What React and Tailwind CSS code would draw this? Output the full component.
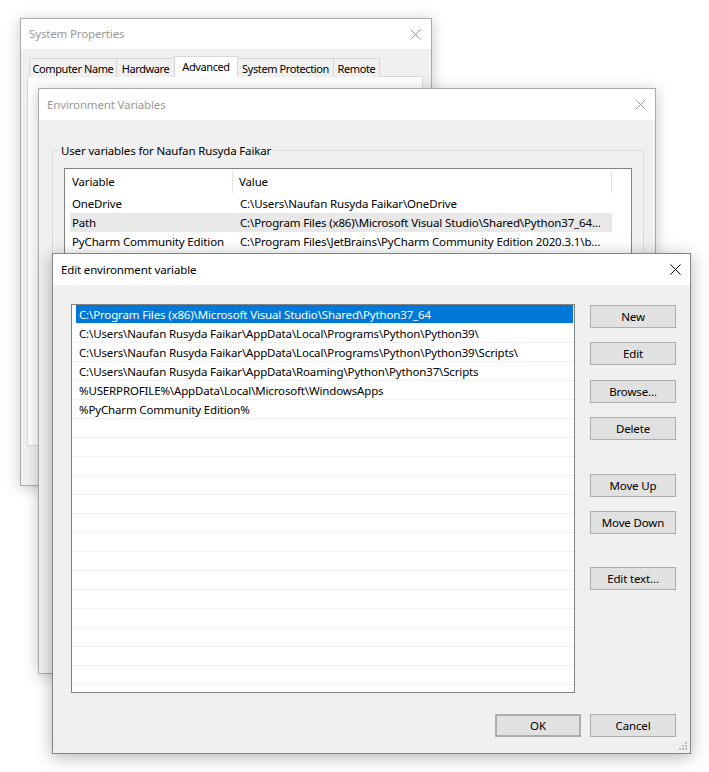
import React from "react";

function CloseX({ color }) {
  return (
    <svg width="11" height="11" viewBox="0 0 11 11" className="block">
      <path d="M0.5 0.5 L10.5 10.5 M10.5 0.5 L0.5 10.5" stroke={color} strokeWidth="1" fill="none" />
    </svg>
  );
}

function Btn({ children, className = "" }) {
  return (
    <div
      className={
        "w-[86px] h-[23px] flex items-center justify-center bg-[#e1e1e1] border border-[#adadad] text-black leading-none " +
        className
      }
    >
      {children}
    </div>
  );
}

const paths = [
  "C:\\Program Files (x86)\\Microsoft Visual Studio\\Shared\\Python37_64",
  "C:\\Users\\Naufan Rusyda Faikar\\AppData\\Local\\Programs\\Python\\Python39\\",
  "C:\\Users\\Naufan Rusyda Faikar\\AppData\\Local\\Programs\\Python\\Python39\\Scripts\\",
  "C:\\Users\\Naufan Rusyda Faikar\\AppData\\Roaming\\Python\\Python37\\Scripts",
  "%USERPROFILE%\\AppData\\Local\\Microsoft\\WindowsApps",
  "%PyCharm Community Edition%",
];

const tab = "h-[19px] border border-b-0 border-[#d9d9d9] bg-[#f0f0f0] flex items-center justify-center leading-none whitespace-nowrap text-[11px] tracking-[-0.4px]";

export default function App() {
  const rows = Array.from({ length: 20 }, (_, i) => paths[i] || "");
  return (
    <div className="relative w-[709px] h-[772px] bg-white overflow-hidden font-['Noto_Sans',sans-serif] text-[11.5px] tracking-[-0.15px] text-black">
      {/* System Properties window */}
      <div className="absolute left-[20px] top-[18px] w-[412px] h-[468px] border border-[#aaaaaa] bg-[#f0f0f0] shadow-[0_2px_14px_rgba(0,0,0,0.22)] flex flex-col">
        <div className="h-[30px] bg-white flex items-center justify-between pl-[8px] pr-[10px] shrink-0">
          <span className="text-[#999999]">System Properties</span>
          <CloseX color="#999999" />
        </div>
        <div className="px-[6px] pt-[7px]">
          <div className="flex items-end h-[21px] pl-[2px]">
            <div className={tab + " w-[88px]"}>Computer Name</div>
            <div className={tab + " -ml-px w-[59px]"}>Hardware</div>
            <div className="-ml-px w-[64px] h-[21px] border border-b-0 border-[#d9d9d9] bg-white flex items-center justify-center pb-[2px] leading-none whitespace-nowrap text-[11px] tracking-[-0.4px] relative z-10">Advanced</div>
            <div className={tab + " -ml-px w-[97px]"}>System Protection</div>
            <div className={tab + " -ml-px w-[47px]"}>Remote</div>
          </div>
          <div className="-mt-px w-[396px] h-[370px] border border-[#d9d9d9] bg-white" />
        </div>
      </div>

      {/* Environment Variables window */}
      <div className="absolute left-[38px] top-[88px] w-[618px] h-[586px] border border-[#aaaaaa] bg-[#f0f0f0] shadow-[0_2px_14px_rgba(0,0,0,0.22)] flex flex-col">
        <div className="h-[31px] bg-white flex items-center justify-between pl-[8px] pr-[9px] shrink-0">
          <span className="text-[#999999]">Environment Variables</span>
          <CloseX color="#999999" />
        </div>
        <div className="pt-[22px] pl-[13px] pr-[11px]">
          <fieldset className="border border-[#dcdcdc] h-[500px] px-[11px] pt-[9px]">
            <legend className="-ml-[5px] px-[2px] leading-[17px]">User variables for Naufan Rusyda Faikar</legend>
            <div className="border border-[#828282] bg-white h-[400px]">
              <div className="flex h-[25px] w-[547px]">
                <div className="w-[168px] flex items-center pl-[7px] border-r border-[#e5e5e5] my-px">Variable</div>
                <div className="flex-1 flex items-center pl-[6px] border-r border-[#e5e5e5] my-px">Value</div>
              </div>
              {[
                ["OneDrive", "C:\\Users\\Naufan Rusyda Faikar\\OneDrive", false],
                ["Path", "C:\\Program Files (x86)\\Microsoft Visual Studio\\Shared\\Python37_64...", true],
                ["PyCharm Community Edition", "C:\\Program Files\\JetBrains\\PyCharm Community Edition 2020.3.1\\b...", false],
              ].map(([k, v, sel]) => (
                <div key={k} className={"flex h-[19px] ml-[5px] w-[542px] items-center " + (sel ? "bg-[#e8e8e8]" : "")}>
                  <div className="w-[163px] pl-[2px] whitespace-nowrap overflow-hidden">{k}</div>
                  <div className="flex-1 pl-[7px] whitespace-nowrap">{v}</div>
                </div>
              ))}
            </div>
          </fieldset>
        </div>
      </div>

      {/* Edit environment variable window */}
      <div className="absolute left-[52px] top-[253px] w-[639px] h-[501px] border border-[#858585] bg-[#f0f0f0] shadow-[0_3px_16px_rgba(0,0,0,0.3)] flex flex-col">
        <div className="h-[31px] bg-white flex items-center justify-between pl-[8px] pr-[9px] shrink-0">
          <span>Edit environment variable</span>
          <CloseX color="#000000" />
        </div>
        <div className="pt-[19px] pl-[18px] flex">
          <div className="w-[504px] h-[389px] border border-[#828282] bg-white">
            {rows.map((p, i) => (
              <div key={i} className="h-[19px] border-b border-[#f0f0f0] flex">
                <div
                  className={
                    "ml-[4px] mr-px flex-1 h-[18px] flex items-center pl-[3px] pt-px whitespace-nowrap " +
                    (i === 0 ? "bg-[#0078d7] text-white" : "")
                  }
                >
                  {p}
                </div>
              </div>
            ))}
          </div>
          <div className="ml-[15px] pt-px flex flex-col">
            <Btn>New</Btn>
            <Btn className="mt-[14px]">Edit</Btn>
            <Btn className="mt-[15px]">Browse...</Btn>
            <Btn className="mt-[14px]">Delete</Btn>
            <Btn className="mt-[34px]">Move Up</Btn>
            <Btn className="mt-[14px]">Move Down</Btn>
            <Btn className="mt-[33px]">Edit text...</Btn>
          </div>
        </div>
        <div className="flex justify-end pr-[14px] mt-[21px] gap-[9px]">
          <Btn className="border-2 border-[#0078d7]">OK</Btn>
          <Btn>Cancel</Btn>
        </div>
        <svg width="8" height="8" viewBox="0 0 8 8" className="absolute right-[3px] bottom-[3px]">
          <rect x="6" y="0" width="2" height="2" fill="#bdbdbd" />
          <rect x="3" y="3" width="2" height="2" fill="#bdbdbd" />
          <rect x="6" y="3" width="2" height="2" fill="#bdbdbd" />
          <rect x="0" y="6" width="2" height="2" fill="#bdbdbd" />
          <rect x="3" y="6" width="2" height="2" fill="#bdbdbd" />
          <rect x="6" y="6" width="2" height="2" fill="#bdbdbd" />
        </svg>
      </div>
    </div>
  );
}
